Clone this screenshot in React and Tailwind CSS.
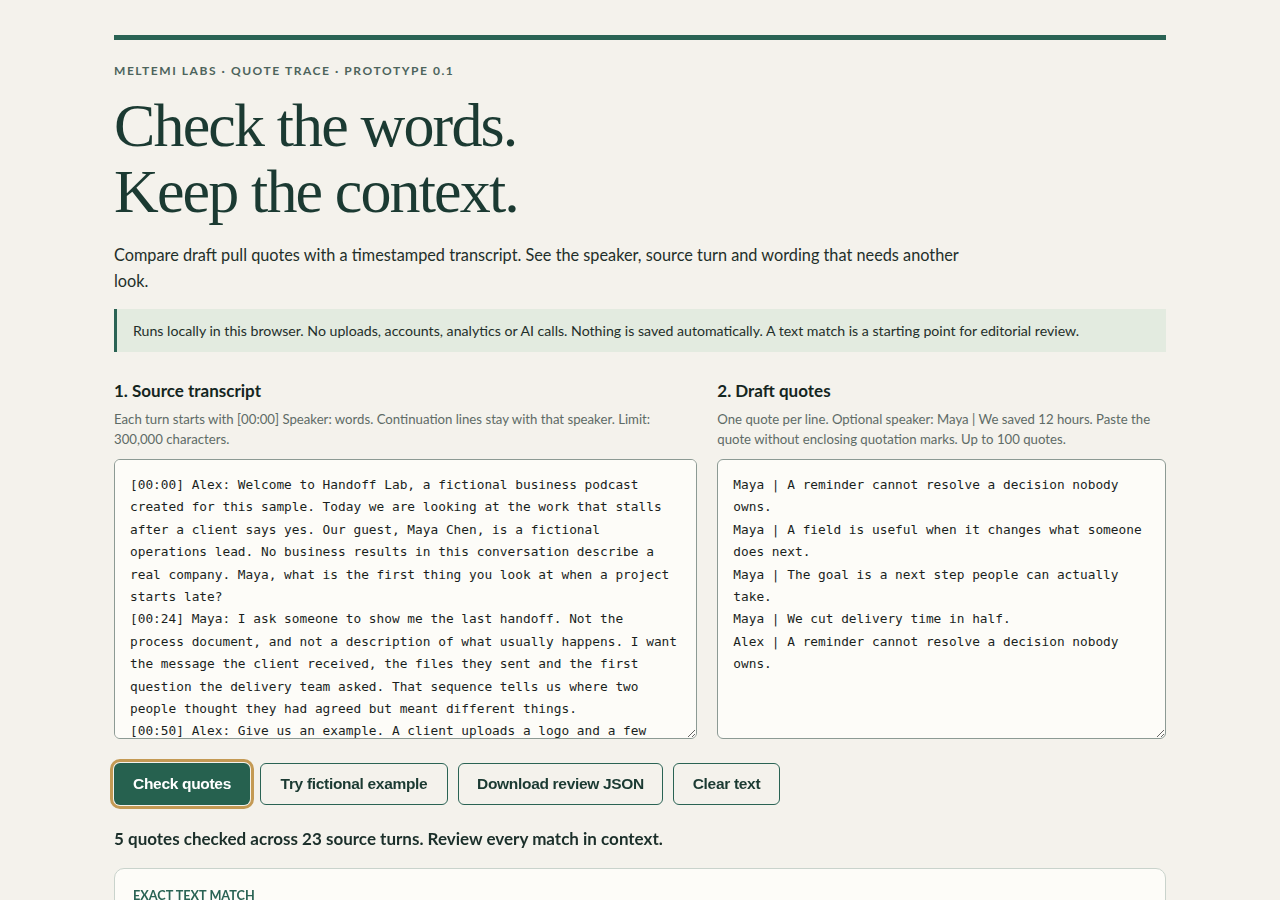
import { useState } from "react";

const transcript = `[00:00] Alex: Welcome to Handoff Lab, a fictional business podcast created for this sample. Today we are looking at the work that stalls after a client says yes. Our guest, Maya Chen, is a fictional operations lead. No business results in this conversation describe a real company. Maya, what is the first thing you look at when a project starts late?
[00:24] Maya: I ask someone to show me the last handoff. Not the process document, and not a description of what usually happens. I want the message the client received, the files they sent and the first question the delivery team asked. That sequence tells us where two people thought they had agreed but meant different things.
[00:50] Alex: Give us an example. A client uploads a logo and a few brand notes, then what?
[01:05] Maya: Then someone has to decide whether those notes are enough to start. If nobody owns that decision, a reminder goes out, and then another one.`;

const quotes = `Maya | A reminder cannot resolve a decision nobody owns.
Maya | A field is useful when it changes what someone does next.
Maya | The goal is a next step people can actually take.
Maya | We cut delivery time in half.
Alex | A reminder cannot resolve a decision nobody owns.`;

function App() {
  const [source, setSource] = useState(transcript);
  const [draft, setDraft] = useState(quotes);

  return (
    <div className="min-h-screen bg-[#f4f2ec] text-[#1d2f29] font-['Lato',sans-serif]">
      <div className="max-w-[1100px] mx-auto px-6 pt-[35px] pb-16">
        {/* Header */}
        <div className="border-t-[5px] border-[#2a6354] pt-[23px]">
          <p className="text-[12px] leading-[16px] font-bold uppercase tracking-[0.13em] text-[#4d645c]">
            Meltemi Labs · Quote Trace · Prototype 0.1
          </p>
          <h1 className="mt-[13px] font-['Liberation_Serif',serif] text-[62px] leading-[66px] tracking-[-0.03em] text-[#1b3a32]">
            Check the words.
            <br />
            Keep the context.
          </h1>
          <p className="mt-[18px] max-w-[845px] text-[16.3px] leading-[26px] text-[#1f2f2a]">
            Compare draft pull quotes with a timestamped transcript. See the speaker, source turn and wording that needs
            another look.
          </p>
        </div>

        {/* Notice */}
        <div className="mt-[15px] border-l-[3px] border-[#2a6354] bg-[#e3ebe0] px-4 py-[11.5px] text-[14.15px] leading-[20px] text-[#1f2f2a]">
          Runs locally in this browser. No uploads, accounts, analytics or AI calls. Nothing is saved automatically. A text
          match is a starting point for editorial review.
        </div>

        {/* Inputs */}
        <div className="mt-[28px] grid grid-cols-[1.3fr_1fr] gap-5">
          <div>
            <h2 className="text-[17px] font-bold leading-[22px] text-[#14261f]">1. Source transcript</h2>
            <p className="mt-[8px] text-[13.2px] leading-[19.5px] text-[#5e6b66]">
              Each turn starts with [00:00] Speaker: words. Continuation lines stay with that speaker. Limit: 300,000
              characters.
            </p>
            <textarea
              value={source}
              onChange={(e) => setSource(e.target.value)}
              className="mt-[10px] block w-full h-[280px] rounded-md border border-[#8c9a94] bg-[#fdfcf8] px-[15px] py-[14px] font-['DejaVu_Sans_Mono',monospace] text-[12.8px] leading-[22.4px] text-[#1a1f1d] outline-none"
            />
          </div>
          <div>
            <h2 className="text-[17px] font-bold leading-[22px] text-[#14261f]">2. Draft quotes</h2>
            <p className="mt-[8px] text-[13.2px] leading-[19.5px] text-[#5e6b66]">
              One quote per line. Optional speaker: Maya | We saved 12 hours. Paste the quote without enclosing quotation
              marks. Up to 100 quotes.
            </p>
            <textarea
              value={draft}
              onChange={(e) => setDraft(e.target.value)}
              className="mt-[10px] block w-full h-[280px] rounded-md border border-[#8c9a94] bg-[#fdfcf8] px-[15px] py-[14px] font-['DejaVu_Sans_Mono',monospace] text-[12.8px] leading-[22.4px] text-[#1a1f1d] outline-none"
            />
          </div>
        </div>

        {/* Buttons */}
        <div className="mt-6 flex gap-[10px] font-['Liberation_Sans',sans-serif]">
          <button className="h-[42px] w-[136px] rounded-md bg-[#26614f] text-[15.5px] font-bold tracking-[-0.02em] text-white outline-[3px] outline-offset-[1px] outline-[#c49a54] outline-solid">
            Check quotes
          </button>
          <button className="h-[42px] w-[188px] rounded-md border border-[#2a6354] text-[15.5px] font-bold tracking-[-0.02em] text-[#1b3a32]">
            Try fictional example
          </button>
          <button className="h-[42px] w-[205px] rounded-md border border-[#2a6354] text-[15.5px] font-bold tracking-[-0.02em] text-[#1b3a32]">
            Download review JSON
          </button>
          <button className="h-[42px] w-[107px] rounded-md border border-[#2a6354] text-[15.5px] font-bold tracking-[-0.02em] text-[#1b3a32]">
            Clear text
          </button>
        </div>

        <p className="mt-[23px] text-[17px] font-bold leading-[22px] text-[#1b2f2a]">
          5 quotes checked across 23 source turns. Review every match in context.
        </p>

        {/* Result card */}
        <div className="mt-[18px] min-h-[120px] rounded-[10px] border border-[#c9d3cc] bg-[#fdfcf8] px-[18px] pt-[18px] pb-6">
          <p className="text-[12.7px] leading-[16px] font-bold uppercase text-[#2a6354]">Exact text match</p>
        </div>
      </div>
    </div>
  );
}

export default App;
